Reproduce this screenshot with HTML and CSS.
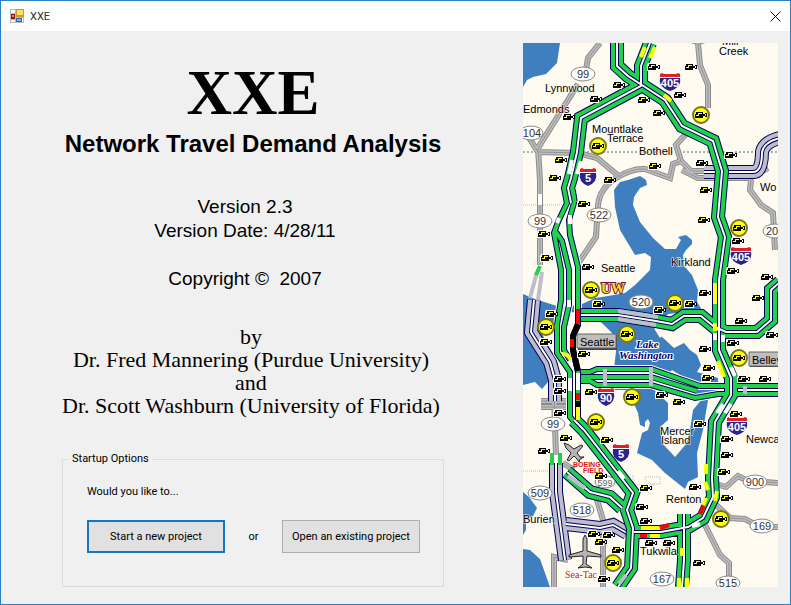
FILE: index.html
```html
<!DOCTYPE html>
<html lang="en">
<head>
<meta charset="utf-8">
<title>XXE</title>
<link rel="stylesheet" href="styles.css">
</head>
<body>
<div class="window">
  <header class="titlebar">
    <svg class="app-icon" viewBox="0 0 14 14" aria-hidden="true">
      <path fill="#b9b9b9" d="M0 0h14v14H0z"/><path fill="#fff" d="M1 1h4v3H1zM1 11h4v2H1zM12 9h1v4h-1z"/>
      <path fill="#c99a28" d="M6 0h8v8H6z"/><path fill="#ffdf63" d="M7 1h6v5H7z"/>
      <path fill="#8e1b1b" d="M1 5h4v5H1z"/><path fill="#d88" d="M2 6h2v2H2z"/>
      <path fill="#3465b0" d="M6 9h6v4H6z"/><path fill="#7db0f0" d="M7 10h4v2H7z"/>
    </svg>
    <span class="window-name">XXE</span>
    <button class="close" type="button" aria-label="Close"><svg viewBox="0 0 11 11"><path d="M.5 .5l10 10M10.500 .5l-10 10"/></svg></button>
  </header>
  <main class="content">
    <section class="about">
      <h1>XXE</h1>
      <h2>Network Travel Demand Analysis</h2>
      <div class="version">
        <p>Version 2.3</p>
        <p>Version Date: 4/28/11</p>
        <p class="copyright">Copyright ©&nbsp; 2007</p>
      </div>
      <div class="authors">
        <p>by</p>
        <p>Dr. Fred Mannering (Purdue University)</p>
        <p>and</p>
        <p>Dr. Scott Washburn (University of Florida)</p>
      </div>
      <fieldset class="startup">
        <legend>Startup Options</legend>
        <p>Would you like to...</p>
        <div class="choices">
          <button class="choice default" type="button">Start a new project</button>
          <span>or</span>
          <button class="choice" type="button">Open an existing project</button>
        </div>
      </fieldset>
    </section>
    <svg class="map" viewBox="523 43 255 544" role="img" aria-label="Seattle area traffic map">
      <defs>
        <g id="cam"><path fill="#fffbf0" d="M-6 -4h9v8h-10v-6z"/><path d="M-5 -3h7v6h-8v-4h1zM2 -1h2v-1h2v4h-2v-1h-2z"/><path fill="#ffff20" d="M-3 -2h4v1h-4zM-5 0h2v-1h1v2h-3z"/><path fill="#fff" d="M4 -1h1v2h-1z"/></g>
        <g id="cam-on"><circle r="8" fill="#ffff18" stroke="#77771a" stroke-width="2"/><path d="M-5 -3h7v6h-8v-4h1zM2 -1h2v-1h2v4h-2v-1h-2z"/><path fill="#ffff20" d="M-3 -2h4v1h-4zM-5 0h2v-1h1v2h-3zM4 -1h1v2h-1z"/></g>
        <g id="shield"><path fill="#fff" d="M-10 -9H10L11 -2Q10 6 0 10Q-10 6 -11 -2Z"/><path fill="#2b2387" d="M-10 -4H10Q12 5 0 9Q-12 5 -10 -4Z"/><path fill="#e21f26" d="M-10 -8L-8 -9L-6 -8H6L8 -9L10 -8V-5H-10Z"/></g>
        <g id="shield-s"><path fill="#fff" d="M-8 -9H8L9 -2Q8 6 0 10Q-8 6 -9 -2Z"/><path fill="#2b2387" d="M-8 -4H8Q10 5 0 9Q-10 5 -8 -4Z"/><path fill="#e21f26" d="M-8 -8L-6 -9L-4 -8H4L6 -9L8 -8V-5H-8Z"/></g>
        <path id="state-roads" d="M600 43L588 58L586 70M578 84L538 148L540 180V265M528 136L538 152L578 153L597 158L621 178M579 262L596 237L598 205Q600 188 616 178Q632 168 645 169L670 178L673 164L681 161L691 171H704M698 43L700 65L708 85V108M691 128L676 145L681 161M682 170L698 178H750L768 168M751 180L750 190L761 205L773 213L775 250M541 401H568M541 407H568M554 395L556 455M568 560L554 557V587M563 463L574 470M594 490L603 520V587M716 484L726 487L738 476L746 480L765 482L778 483M714 503L730 518L745 519L760 527H778M705 525L720 555L729 563V587"/>
        <path id="express" d="M534 300L531 332L536 340L550 362L555 380V401M556 463V492L565 560M566 524L600 528L613 525L627 533M704 172H753Q762 172 762 152Q764 142 780 138"/>
        <path id="freeways" d="M617 43V66L628 76L665 100L682 126L713 141L722 171L718 217L725 237L719 280V350L731 378V395L715 422L712 478L713 497L703 518L688 527L661 532L634 532M650 43L641 66V86L581 118L577 152L571 178L568 188L571 203M715 327L726 332H757L771 320V290L780 282M581 315H618L656 321L672 324L684 316H701L718 330M574 420L584 430L633 493L627 510L633 528L631 568L618 587M684 514V560L682 587M567 472L590 492L610 497L622 508"/>
        <path id="lanes" d="M566 190L567 203L558 222L554 233L561 270V300L557 325V353L570 372V417L581 430M573 190L574 203L569 220L570 235L578 267V325L573 336V350L578 372V420L588 430M556 232L562 241L569 270V305L564 327V350L570 360M581 372H590L597 369H651L700 386H778M581 377H651L697 391M581 381H590L597 385H651L695 398L718 394H778"/>
      </defs>
      <path fill="#fffbf0" d="M523 43h255v544H523z"/>
      <g class="water">
        <path d="M523 43H560L557 63L546 74L533 77L527 80L523 87Z"/>
        <path d="M523 294L535 299L560 307L580 305L595 298L608 296L625 293L635 285L650 270L651 257L645 253L635 255L626 240L620 230L615 207L614 190L620 182L628 180L640 176L646 180L647 185L640 188L634 197L633 205L640 222L653 238L665 249L676 249L681 240L678 237L686 235L692 240L692 244L686 250L683 255L684 266L692 275L698 290L697 302L702 310L668 314L658 327L660 335L674 348L684 343L690 350L697 355L701 365L697 372L718 378V394L708 400L703 430L697 453L698 477L688 482L685 489L665 473L652 460L637 453L642 433L648 430L650 423L648 419L645 422V427L640 425L638 413L628 390L615 390L613 377L617 343L612 333L604 325L590 313L568 312L564 324L557 329L547 320L541 332L556 360V384L548 382L542 389L535 382L523 385Z"/>
        <path d="M523 492L529 497L537 508L533 516L526 520V530L523 535ZM523 549L530 550L540 559L545 573L550 587H523Z"/>
      </g>
      <path fill="#fffbf0" d="M651 387L668 403V420L660 427L662 443L675 457L687 443L690 430L693 410L702 399L680 384L665 382Z"/>
      <path fill="#fffbf0" d="M652 320L665 333L660 338L655 330ZM672 370L680 375L678 380L668 375Z"/>
      <path class="county" d="M523 152H778"/><path class="boundary" d="M523 205H566M523 471H560M633 475V485H655M645 480V477H660V484H650"/>
      <use href="#state-roads" class="road s-edge"/><use href="#state-roads" class="road s-fill"/><use href="#state-roads" class="road s-mid"/>
      <use href="#express" class="road f-edge"/><use href="#express" class="road x-fill"/><use href="#express" class="road f-gap"/><use href="#express" class="road f-mid"/>
      <use href="#lanes" class="road l-halo"/><use href="#lanes" class="road l-edge"/>
      <use href="#freeways" class="road f-edge"/>
      <use href="#lanes" class="road l-fill"/><use href="#freeways" class="road f-fill"/>
      <use href="#freeways" class="road f-gap"/><use href="#freeways" class="road f-mid"/>
      <path class="seg lav" d="M537 272L530 298M542 272L538 300"/>
      <path class="seg white" d="M540 194V205M559 218L557 223M570 215V224M570 378V391M569 300V307M578 373V390M572 160L569 174M581 161L577 174M715 284V291M715 333V340M723 335V342M731 367L735 376M723 404L717 413M731 404L725 413M618 471L624 479M700 524L692 526"/>
      <path class="seg grn" d="M540 266L536 275M552 453V465M560 453V465"/>
      <path class="seg lav" d="M618 311L658 317M618 319L656 325M605 369V386M651 367V386M745 386V394M568 476L585 488M626 575L619 584"/>
      <path class="seg yel" d="M645 47L641 57M655 47L650 58M664 95L671 101M715 283V304M715 323V331M718 361L724 377M578 407V420M562 354Q569 354 571 360M706 464V474M705 482L708 490M717 491L715 501M706 498L703 505M641 528H660M650 536H660M682 548V556M679 578V587M687 578V587"/>
      <path class="seg blk" d="M578 324L573 336V350L578 371M578 401V407"/>
      <path class="seg red" d="M578 309V324M572 339V347M578 393V400M704 506L700 514M660 528L669 525M640 536H647"/>
      <g class="routes">
        <g><ellipse cx="583" cy="74" rx="12" ry="7"/><ellipse cx="531" cy="133" rx="12" ry="7"/><ellipse cx="599" cy="215" rx="12" ry="7"/><ellipse cx="540" cy="221" rx="12" ry="7"/><ellipse cx="641" cy="302" rx="12" ry="7"/><ellipse cx="553" cy="424" rx="12" ry="7"/><ellipse cx="540" cy="493" rx="12" ry="7"/><ellipse cx="582" cy="510" rx="12" ry="7"/><ellipse cx="605" cy="482" rx="10" ry="6"/><ellipse cx="662" cy="579" rx="12" ry="7"/><ellipse cx="728" cy="583" rx="12" ry="7"/><ellipse cx="755" cy="482" rx="12" ry="7"/><ellipse cx="762" cy="526" rx="12" ry="7"/><ellipse cx="775" cy="231" rx="12" ry="7"/><ellipse cx="698" cy="37" rx="12" ry="7"/></g>
        <text x="583" y="78">99</text><text x="532" y="137">104</text><text x="599" y="219">522</text><text x="540" y="225">99</text><text x="641" y="306">520</text><text x="553" y="428">99</text><text x="540" y="497">509</text><text x="582" y="514">518</text><text x="605" y="486" class="small">599</text><text x="662" y="583">167</text><text x="728" y="587">515</text><text x="755" y="486">900</text><text x="762" y="530">169</text><text x="772" y="235">20</text>
      </g>
      <g class="shields">
        <use href="#shield" x="670" y="82"/><use href="#shield" x="741" y="256"/><use href="#shield" x="737" y="426"/><use href="#shield-s" x="588" y="177"/><use href="#shield-s" x="606" y="397"/><use href="#shield-s" x="621" y="453"/>
        <text x="670" y="87">405</text><text x="741" y="261">405</text><text x="737" y="431">405</text><text x="588" y="182">5</text><text x="606" y="402">90</text><text x="621" y="458">5</text>
      </g>
      <g>
        <use href="#cam" x="654" y="67"/><use href="#cam" x="691" y="67"/><use href="#cam" x="619" y="85"/><use href="#cam" x="596" y="99"/><use href="#cam" x="644" y="100"/><use href="#cam" x="659" y="113"/><use href="#cam" x="680" y="95"/><use href="#cam" x="569" y="117"/><use href="#cam" x="561" y="160"/><use href="#cam" x="655" y="166"/><use href="#cam" x="702" y="163"/><use href="#cam" x="731" y="155"/>
        <use href="#cam" x="555" y="178"/><use href="#cam" x="610" y="180"/><use href="#cam" x="584" y="204"/><use href="#cam" x="706" y="190"/><use href="#cam" x="704" y="220"/><use href="#cam" x="544" y="234"/><use href="#cam" x="547" y="258"/><use href="#cam" x="588" y="267"/><use href="#cam" x="738" y="241"/><use href="#cam" x="733" y="271"/><use href="#cam" x="767" y="277"/><use href="#cam" x="705" y="293"/><use href="#cam" x="599" y="304"/><use href="#cam" x="691" y="304"/><use href="#cam" x="758" y="298"/><use href="#cam" x="660" y="310"/>
        <use href="#cam" x="552" y="314"/><use href="#cam" x="546" y="342"/><use href="#cam" x="584" y="354"/><use href="#cam" x="741" y="321"/><use href="#cam" x="772" y="335"/><use href="#cam" x="733" y="343"/><use href="#cam" x="705" y="349"/><use href="#cam" x="709" y="368"/><use href="#cam" x="708" y="378"/><use href="#cam" x="744" y="379"/><use href="#cam" x="765" y="379"/><use href="#cam" x="560" y="379"/><use href="#cam" x="560" y="391"/><use href="#cam" x="591" y="392"/><use href="#cam" x="662" y="395"/><use href="#cam" x="679" y="402"/><use href="#cam" x="560" y="413"/><use href="#cam" x="700" y="424"/><use href="#cam" x="736" y="414"/><use href="#cam" x="566" y="438"/><use href="#cam" x="607" y="440"/><use href="#cam" x="727" y="439"/>
        <use href="#cam" x="544" y="451"/><use href="#cam" x="727" y="455"/><use href="#cam" x="724" y="472"/><use href="#cam" x="601" y="476"/><use href="#cam" x="695" y="487"/><use href="#cam" x="727" y="498"/><use href="#cam" x="646" y="488"/><use href="#cam" x="642" y="507"/><use href="#cam" x="646" y="521"/><use href="#cam" x="594" y="534"/><use href="#cam" x="609" y="535"/><use href="#cam" x="601" y="542"/><use href="#cam" x="651" y="543"/><use href="#cam" x="669" y="543"/><use href="#cam" x="618" y="550"/><use href="#cam" x="699" y="563"/><use href="#cam" x="604" y="579"/>
        <use href="#cam-on" x="701" y="115"/><use href="#cam-on" x="598" y="146"/><use href="#cam-on" x="739" y="228"/><use href="#cam-on" x="591" y="290"/><use href="#cam-on" x="675" y="303"/><use href="#cam-on" x="546" y="327"/><use href="#cam-on" x="627" y="334"/><use href="#cam-on" x="739" y="358"/><use href="#cam-on" x="632" y="397"/><use href="#cam-on" x="596" y="422"/><use href="#cam-on" x="721" y="519"/><use href="#cam-on" x="613" y="563"/>
      </g>
      <g class="planes">
        <path d="M585 535L587 539V551L601 555V557L587 556L586 564L592 568L585 567L578 568L583 564V556L569 557V555L583 551V539Z"/>
        <path d="M564 443L569 445L574 449L581 445L583 446L577 453L580 457L584 457L580 459L579 462L577 459L574 456L569 461L567 460L571 453L566 448Z"/>
      </g>
      <g class="places">
        <text x="545" y="92">Lynnwood</text><text x="523" y="113">Edmonds</text><text x="592" y="133">Mountlake</text><text x="607" y="142">Terrace</text><text x="639" y="155">Bothell</text><text x="722" y="45">Mill</text><text x="719" y="55">Creek</text><text x="760" y="191">Wo</text><text x="601" y="272">Seattle</text><text x="671" y="266">Kirkland</text><text x="660" y="435">Mercer</text><text x="661" y="444">Island</text><text x="746" y="443">Newca</text><text x="666" y="503">Renton</text><text x="523" y="523">Burien</text><text x="640" y="555">Tukwila</text>
      </g>
      <g class="city">
        <path class="shade" d="M578 335h39v15h-39zM750 352h30v15h-30z"/><path class="face" d="M577 334h39v14h-39zM749 352h31v14h-31z"/>
        <text x="580" y="346">Seattle</text><text x="752" y="364">Bellev</text>
      </g>
      <text class="uw" x="601" y="293">UW</text>
      <g class="lake"><text x="636" y="348">Lake</text><text x="619" y="359">Washington</text></g>
      <g class="airports"><text x="573" y="467">BOEING</text><text x="583" y="473">FIELD</text><text x="565" y="578" class="seatac">Sea-Tac</text></g>
    </svg>
  </main>
</div>
</body>
</html>
```
FILE: styles.css
```css
* { box-sizing: border-box; }
body { margin: 0; font-family: Roboto, "Liberation Sans", sans-serif; font-size: 11px; color: #000; }
p, h1, h2 { margin: 0; }
.window { display: flex; flex-direction: column; min-height: 100vh; border: 1px solid #2f7fc4; background: #f0f0f0; }
.titlebar { display: flex; align-items: center; gap: 6px; height: 30px; padding: 0 9px; background: #fff; }
.app-icon { width: 14px; height: 14px; }
.window-name { flex: 1; font-size: 11px; color: #333; }
.close { display: flex; padding: 0; border: 0; background: none; }
.close svg { width: 11px; height: 11px; stroke: #111; fill: none; }
.content { flex: 1; display: flex; justify-content: space-between; align-items: stretch; gap: 24px; padding: 12px 12px 17px 61px; }
.about { flex: 0 1 382px; display: flex; flex-direction: column; text-align: center; }
h1 { margin-top: 15px; font: bold 63px/70px "Liberation Serif", serif; }
h2 { font: bold 24px/32px "Liberation Sans", sans-serif; white-space: nowrap; }
.version { margin-top: 35px; padding-right: 16px; font: 19px/24px "Liberation Sans", sans-serif; }
.copyright { margin-top: 24px; }
.authors { margin-top: 34px; padding-right: 4px; font: 22px/23px "Liberation Serif", serif; white-space: nowrap; }
.startup { margin: auto 0 0; padding: 18px 23px 33px 24px; border: 1px solid #dcdcdc; text-align: left; min-width: 0; }
.startup legend { margin-left: -18px; padding: 0 3px; line-height: 14px; }
.startup p { line-height: 16px; }
.choices { display: flex; justify-content: space-between; align-items: center; margin-top: 20px; }
.choice { width: 138px; height: 33px; padding: 0; border: 1px solid #adadad; background: #e1e1e1; font: inherit; color: #000; }
.choice.default { border: 2px solid #1377c8; }

.map { flex: none; width: 255px; height: 544px; }
.road, .seg { fill: none; }
.water { fill: #3f7fbf; }
.county { stroke: #2a8078; stroke-dasharray: 2 2; }
.boundary { fill: none; stroke: #bbb; stroke-dasharray: 1 1; }
.s-edge { stroke: #8c8c8c; stroke-width: 6; }
.s-fill { stroke: #bdbdbd; stroke-width: 4; }
.s-mid { stroke: #929292; stroke-width: 1; }
.f-edge { stroke: #00005a; stroke-width: 14; }
.f-fill { stroke: #22d04c; stroke-width: 12; }
.x-fill { stroke: #bdbdcc; stroke-width: 12; }
.f-gap { stroke: #00005a; stroke-width: 4; }
.f-mid { stroke: #fff; stroke-width: 2; }
.l-halo { stroke: #fff; stroke-width: 8; }
.l-edge { stroke: #00005a; stroke-width: 6; }
.l-fill { stroke: #22d04c; stroke-width: 4; }
.seg { stroke-width: 4; }
.white { stroke: #fff; }
.lav { stroke: #bdbdcc; }
.grn { stroke: #22d04c; }
.yel { stroke: #ffff10; }
.blk { stroke: #000; stroke-width: 6; }
.red { stroke: #f00; }
.routes { font: 11px "Liberation Sans", sans-serif; text-anchor: middle; fill: #333; }
.routes ellipse { fill: #fff; stroke: #888; }
.routes .small { font-size: 9px; fill: #666; }
.shields { font: bold 11px "Liberation Sans", sans-serif; text-anchor: middle; }
.shields text { fill: #fff; }
.planes { fill: #b5b5b5; stroke: #222; }
.places { font: 11px "Liberation Sans", sans-serif; paint-order: stroke; stroke: #fffbf0; stroke-width: 1px; }
.city { font: 11px "Liberation Sans", sans-serif; }
.shade { fill: #444; }
.face { fill: #bebebe; stroke: #666; }
.uw { font: bold 14px "Liberation Serif", serif; fill: #ffe020; stroke: #801040; stroke-width: 2px; paint-order: stroke; }
.lake { font: italic bold 11px "Liberation Serif", serif; fill: #000070; stroke: #fff; stroke-width: 2px; paint-order: stroke; }
.airports { font: bold 7px "Liberation Sans", sans-serif; fill: #d01818; }
.airports .seatac { font: 10px "Liberation Serif", serif; }
```
